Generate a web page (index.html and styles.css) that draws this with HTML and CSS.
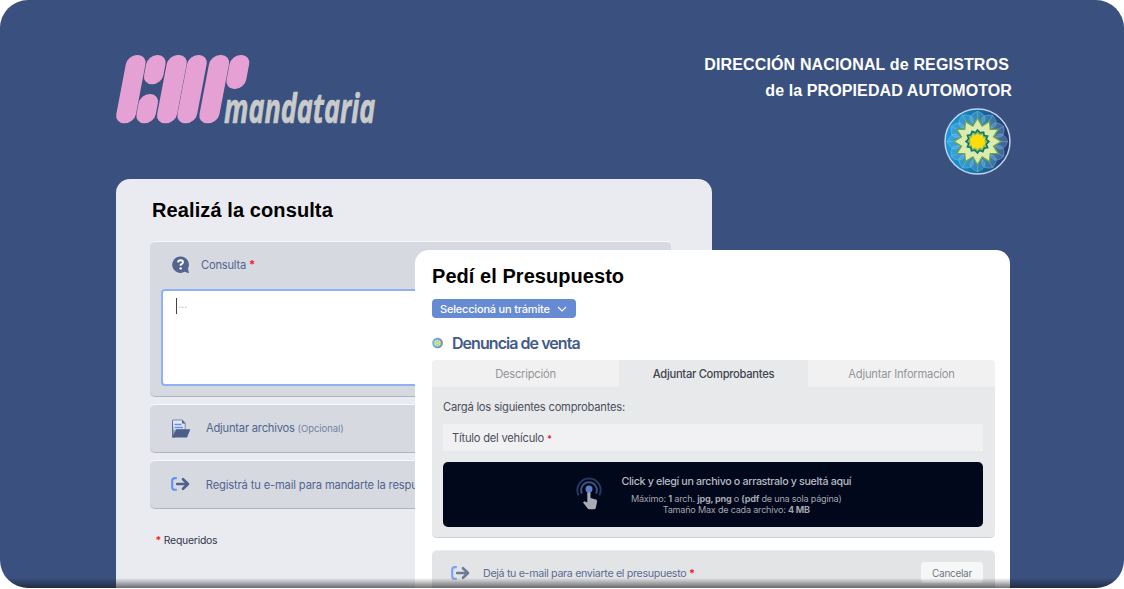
FILE: index.html
```html
<!DOCTYPE html>
<html lang="es">
<head>
<meta charset="utf-8">
<title>CDR mandataria</title>
<link rel="stylesheet" href="styles.css">
</head>
<body>
<svg class="defs" width="0" height="0" aria-hidden="true">
  <defs>
    <linearGradient id="sea" x1="0" x2="1" y1="0" y2="0">
      <stop offset="0" stop-color="#169de0"/><stop offset=".5" stop-color="#0f72a8"/><stop offset="1" stop-color="#2b356e"/>
    </linearGradient>
    <symbol id="seal" viewBox="-50 -50 100 100">
      <circle r="48.5" fill="url(#sea)" stroke="#c3d2e8" stroke-width="2.2"/>
      <g fill="#8cc8e8" fill-opacity=".28" stroke="#b5dcef" stroke-opacity=".45" stroke-width="1">
        <g id="pair"><path id="petal" d="M0-24C-15-28-15-40 0-45C15-40 15-28 0-24ZM0-24V-45"/><use href="#petal" transform="rotate(180)"/></g>
        <use href="#pair" transform="rotate(30)"/><use href="#pair" transform="rotate(60)"/><use href="#pair" transform="rotate(90)"/><use href="#pair" transform="rotate(120)"/><use href="#pair" transform="rotate(150)"/>
      </g>
      <path fill="#dcebb0" stroke="#6fa54f" stroke-width="2" d="M0-35L7-23L18-30L19-18L31-18L24-7L35 0L24 7L31 18L19 18L18 30L7 23L0 35L-7 23L-18 30L-19 18L-31 18L-24 7L-35 0L-24-7L-31-18L-19-18L-18-30L-7-23Z"/>
      <path fill="#8cc26a" stroke="#16795f" stroke-width="2.5" d="M0-17L4-13L9-14L10-9L15-8L13-3L17 0L13 4L15 9L10 10L8 15L3 13L0 17L-4 13L-9 14L-10 9L-15 8L-13 3L-17 0L-13-4L-15-9L-10-10L-8-15L-3-13Z"/>
      <path fill="#ffdc0a" d="M0-12L3-9L8-10L8-6L12-4L10 0L12 4L8 6L8 10L3 9L0 12L-3 9L-8 10L-8 6L-12 4L-10 0L-12-4L-8-6L-8-10L-3-9Z"/>
    </symbol>
    <symbol id="send" viewBox="0 0 19 14">
      <path d="M5.8 1.1H4Q1.2 1.1 1.2 3.7V10.2Q1.2 12.8 4 12.8H5.8" fill="none" stroke="#5f92f5" stroke-width="2.1"/>
      <path d="M6.2 7H16.5M12 2.2L17 7L12 11.8" fill="none" stroke="currentColor" stroke-width="2.6" stroke-linejoin="round" stroke-linecap="round"/>
    </symbol>
  </defs>
</svg>
<main class="stage">
  <header class="header">
    <svg class="logo" viewBox="0 0 855 270" role="img" aria-label="cdr mandataria">
      <g fill="#e5a1d3" transform="skewX(-10.8)">
        <rect x="73.500" y="30" width="59" height="205" rx="28"/>
        <rect x="134.500" y="30" width="58" height="88" rx="28"/>
        <rect x="134" y="147" width="58" height="88" rx="28"/>
        <rect x="196" y="30" width="60" height="205" rx="28"/>
        <rect x="257" y="30" width="59" height="205" rx="28"/>
        <rect x="323" y="30" width="60" height="205" rx="28"/>
        <rect x="384.500" y="30" width="59" height="102" rx="28"/>
      </g>
      <text class="logo-word" x="357" y="235" textLength="454" lengthAdjust="spacingAndGlyphs">mandataria</text>
    </svg>
    <div class="agency">
      <p class="agency-top">DIRECCIÓN NACIONAL de REGISTROS</p>
      <p class="agency-sub">de la PROPIEDAD AUTOMOTOR</p>
      <svg class="agency-seal"><use href="#seal"/></svg>
    </div>
  </header>

  <section class="panel inquiry">
    <h2 class="title inquiry-title">Realizá la consulta</h2>
    <div class="card question">
      <div class="question-head">
        <svg class="icon-question" viewBox="0 0 18 18"><path d="M8.500.5A8.200 8.200 0 1 0 12.500 15.800L17 17.300L16 12.500A8.200 8.200 0 0 0 8.500.5Z" fill="#53658f"/><path d="M6 6.400Q6.200 4.200 8.600 4.200Q11 4.200 11 6.300Q11 7.600 8.700 8.600V9.800" fill="none" stroke="#fff" stroke-width="1.9"/><circle cx="8.700" cy="12.400" r="1.200" fill="#fff"/></svg>
        <span class="t-question">Consulta <b class="req">*</b></span>
      </div>
      <div class="textarea"><span class="caret"></span><span class="dots">...</span></div>
    </div>
    <div class="card row">
      <svg class="icon-file" viewBox="0 0 20 19"><path d="M1 1V18.500H4V1Z" fill="#5c6e97"/><path d="M1.800 1H11L14.200 4V11H4L2.800 16" fill="#e3e7f0" stroke="#7c8aa9"/><path d="M11 .5V4.400H14.500Z" fill="#53658f"/><path d="M3.500 5.500H10.500M3.500 8.500H12" stroke="#5f92f5" stroke-width="1.6"/><path d="M5.300 10.300H19.300L16 18.600H1.500Z" fill="#4c5f8b"/></svg>
      <span class="t-attach">Adjuntar archivos <small class="opt">(Opcional)</small></span>
    </div>
    <div class="card row">
      <svg class="icon-send"><use href="#send"/></svg>
      <span class="t-mail">Registrá tu e-mail para mandarte la respuesta</span>
    </div>
    <p class="required"><b class="req">*</b> Requeridos</p>
  </section>

  <section class="panel quote">
    <h2 class="title quote-title">Pedí el Presupuesto</h2>
    <button class="select">Seleccioná un trámite <svg class="chevron" viewBox="0 0 10 6"><path d="M1 1L5 5L9 1" fill="none" stroke="#fff" stroke-width="1.1"/></svg></button>
    <h3 class="subject"><svg class="mini-seal"><use href="#seal"/></svg><span>Denuncia de venta</span></h3>
    <div class="tabs">
      <span class="tab">Descripción</span>
      <span class="tab active">Adjuntar Comprobantes</span>
      <span class="tab">Adjuntar Informacíon</span>
    </div>
    <div class="tab-body">
      <p class="hint">Cargá los siguientes comprobantes:</p>
      <div class="field">Título del vehículo <b class="req small">*</b></div>
      <div class="drop">
        <svg class="icon-touch" viewBox="0 0 26 34"><g fill="none" stroke-width="1.9"><path d="M2.700 19.400A11.600 11.600 0 1 1 23.300 19.400" stroke="#26395f"/><path d="M6 17.500A7.800 7.800 0 1 1 20 17.500" stroke="#3c5180"/></g><path d="M11.300 15H14.500V22L20.500 23.800Q21.200 24.300 21 26L19.800 32Q19.300 33.300 18 33.300H13Q12 33.300 11.300 32L7 26.500L8.400 25.200L11.300 26.500Z" fill="#a9acb5"/><circle cx="13" cy="13" r="3.500" fill="#5c7ec4"/></svg>
        <div class="drop-text">
          <p class="drop-main">Click y elegí un archivo o arrastralo y sueltá aquí</p>
          <p class="drop-sub">Máximo: <b>1</b> arch. <b>jpg, png</b> o <b>(pdf</b> de una sola página)</p>
          <p class="drop-max">Tamaño Max de cada archivo: <b>4 MB</b></p>
        </div>
      </div>
    </div>
    <div class="mail-row">
      <svg class="icon-send soft"><use href="#send"/></svg>
      <span class="t-quote">Dejá tu e-mail para enviarte el presupuesto <b class="req">*</b></span>
      <button class="cancel">Cancelar</button>
    </div>
  </section>
  <div class="fade"></div>
</main>
</body>
</html>
```

FILE: styles.css
```css
* { box-sizing: border-box; }
body { margin: 0; background: #fff; font-family: Inter, "Liberation Sans", sans-serif; font-size: 11.2px; line-height: 16px; letter-spacing: -.23px; overflow: hidden; }
p, h2, h3 { margin: 0; }
svg { display: block; flex: none; }
button { border: 0; font: inherit; letter-spacing: inherit; padding: 0; }
.defs { position: absolute; }

.stage { position: relative; width: 1124px; height: 588px; overflow: hidden; border-radius: 28px; background: #3a507e;
  display: grid; grid-template: 179px 1fr / 116px 299px 297px 298px 1fr; }
.header { grid-area: 1 / 1 / 2 / 6; display: flex; justify-content: space-between; padding: 45px 112px 0 105px; }
.logo { width: 285px; height: 90px; overflow: visible; }
.logo-word { font: italic 700 124px "Open Sans", sans-serif; letter-spacing: 0; fill: #c9cbcb; stroke: #c9cbcb; stroke-width: 2; }
.agency { display: flex; flex-direction: column; align-items: flex-end; color: #fff; font: 700 16px/26px "Liberation Sans", sans-serif; letter-spacing: .15px; padding-top: 7px; white-space: nowrap; }
.agency-top { padding-right: 3px; }
.agency-sub { letter-spacing: .1px; }
.agency-seal { width: 67px; height: 67px; margin: 4px 1px 0 0; }

.panel { overflow: hidden; }
.title { font: 700 20px/24px "Liberation Sans", sans-serif; letter-spacing: .1px; color: #000; white-space: nowrap; }
.quote-title { letter-spacing: .05px; }
.req { color: #f2202a; }
.small { font-size: 9px; }
.inquiry { grid-area: 2 / 2 / 3 / 4; background: #eaebf1; border-radius: 14px 14px 0 0; padding: 19px 41px 0 34px; }
.inquiry-title { padding-left: 2px; margin-bottom: 19px; }
.card { background: #d6d9e0; border-radius: 5px; border-top: 1px solid #f7f8fa; border-bottom: 1px solid #b4b6bd; margin-bottom: 7px; color: #53658f; white-space: nowrap; }
.question { height: 156px; padding: 13px 0 0 11px; margin-bottom: 6.5px; }
.question-head { display: flex; align-items: center; gap: 11.5px; padding-left: 10.5px; height: 19px; }
.t-question { padding-top: 1px; }
.icon-question { width: 18px; height: 18px; }
.textarea { margin-top: 15px; height: 97px; background: #fff; border: 2px solid #8fb1f3; border-radius: 4px; padding: 7px 0 0 13px; display: flex; color: #c2c2c2; }
.caret { width: 1px; height: 16px; background: #444; margin: 0 1px 0 0; }
.dots { line-height: 13px; }
.row { height: 49px; margin-bottom: 7px; display: flex; align-items: center; padding-left: 21px; gap: 15px; }
.icon-file { width: 20px; height: 19px; }
.icon-send { width: 19px; height: 14px; color: #4f6089; }
.t-attach { padding-top: 1px; }
.t-mail { padding: 2px 0 0 .8px; letter-spacing: -.16px; }
.opt { font-size: 9.5px; color: #7482a2; letter-spacing: -.05px; }
.required { margin-top: 24px; padding-left: 5.5px; font-size: 10.4px; color: #33384a; }

.quote { grid-area: 2 / 3 / 3 / 5; margin-top: 71px; background: #fff; border-radius: 14px 14px 0 0; padding: 14px 15px 0 17px; }
.select { display: flex; align-items: center; gap: 7px; margin-top: 11px; height: 19px; width: 144px; padding-left: 8px; border-radius: 4px; background: #678bd3; color: #fff; font-size: 11px; font-weight: 500; letter-spacing: -.19px; white-space: nowrap; }
.chevron { width: 10px; height: 6px; }
.subject { display: flex; align-items: center; gap: 9px; margin-top: 14px; height: 22px; font-size: 16px; font-weight: 600; letter-spacing: -.95px; color: #445a89; }
.mini-seal { width: 11px; height: 12px; opacity: .75; }
.tabs { display: grid; grid-template-columns: 187px 189px 187px; margin-top: 6px; height: 27px; border-radius: 4px 4px 0 0; overflow: hidden; }
.tab { background: #f1f1f2; color: #949599; text-align: center; line-height: 28px; }
.tab.active { background: #e8e9eb; color: #41464f; font-weight: 500; letter-spacing: -.3px; }
.tab-body { height: 151px; background: #e8e9eb; border-bottom: 1px solid #cdced1; border-radius: 0 0 5px 5px; padding: 12px 12px 0 11px; color: #4b505b; }
.hint { height: 16px; }
.field { margin-top: 9px; height: 27px; line-height: 28px; background: #f1f1f4; padding-left: 9px; }
.drop { margin-top: 11px; height: 65px; border-radius: 5px; background: #01081b; display: flex; padding: 11px 0 0 133px; gap: 19.5px; color: #a3a6ae; white-space: nowrap; }
.icon-touch { width: 26px; height: 34px; margin-top: 3px; }
.drop-text { text-align: center; font-size: 9.1px; line-height: 11.5px; letter-spacing: -.22px; }
.drop-main { font-size: 10.7px; line-height: 16px; letter-spacing: -.34px; padding-top: 1px; margin-bottom: 2.5px; color: #b9bbc1; font-weight: 500; }
.mail-row { margin-top: 12px; height: 60px; border-top: 1px solid #eeeeef; border-radius: 5px 5px 0 0; background: #e3e4e6; display: flex; align-items: flex-start; padding: 11px 12px 0 19px; color: #5b6c95; white-space: nowrap; }
.soft { opacity: .8; margin: 4px 13px 0 0; }
.t-quote { margin-top: 4px; font-size: 10.7px; letter-spacing: -.33px; }
.cancel { margin-left: auto; width: 62px; height: 21px; border-radius: 4px; background: #f6f8f8; color: #6f7682; font-size: 10px; letter-spacing: -.3px; }

.fade { position: absolute; left: 0; right: 0; bottom: 0; height: 10px; background: linear-gradient(rgba(20,20,25,0), rgba(20,20,25,.6)); }
```
